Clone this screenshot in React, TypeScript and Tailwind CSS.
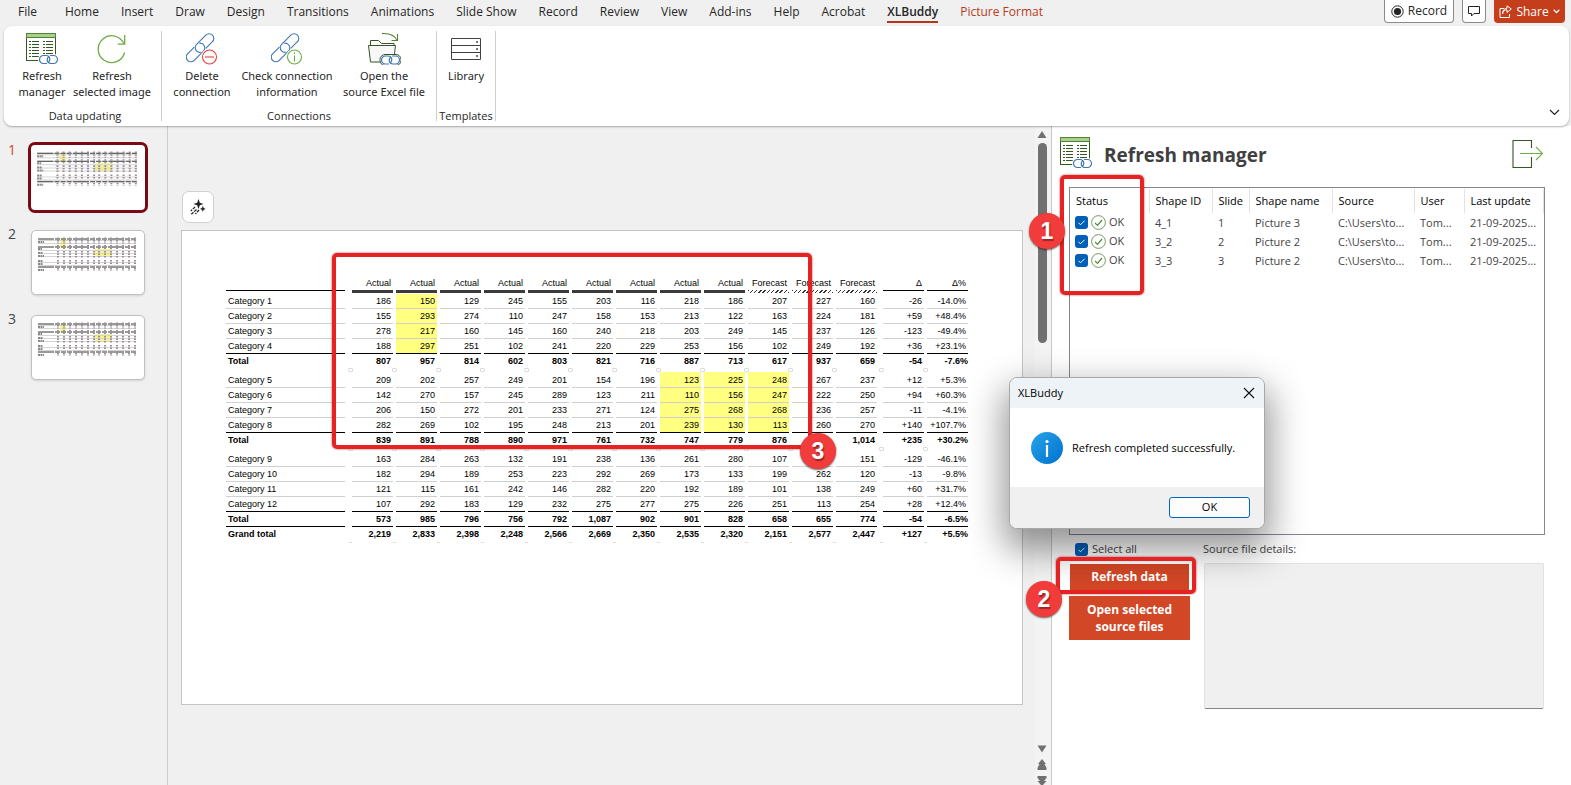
import type { ReactNode } from 'react';

const tabs = [
  'File', 'Home', 'Insert', 'Draw', 'Design', 'Transitions', 'Animations', 'Slide Show',
  'Record', 'Review', 'View', 'Add-ins', 'Help', 'Acrobat', 'XLBuddy', 'Picture Format',
];

type Row = { label: string; values: string[]; kind?: 'total' | 'grand'; before?: 'black'; highlight?: number[] };

const row = (label: string, values: string, extra: Partial<Row> = {}): Row => ({
  label,
  values: values.split(' ').map((v) => (v === '.' ? '' : v)),
  ...extra,
});

const headings = 'Actual Actual Actual Actual Actual Actual Actual Actual Actual Forecast Forecast Forecast Δ Δ%'.split(' ');

const sections: Row[][] = [
  [
    row('Category 1', '186 150 129 245 155 203 116 218 186 207 227 160 -26 -14.0%', { highlight: [1] }),
    row('Category 2', '155 293 274 110 247 158 153 213 122 163 224 181 +59 +48.4%', { highlight: [1] }),
    row('Category 3', '278 217 160 145 160 240 218 203 249 145 237 126 -123 -49.4%', { highlight: [1] }),
    row('Category 4', '188 297 251 102 241 220 229 253 156 102 249 192 +36 +23.1%', { highlight: [1], before: 'black' }),
    row('Total', '807 957 814 602 803 821 716 887 713 617 937 659 -54 -7.6%', { kind: 'grand' }),
  ],
  [
    row('Category 5', '209 202 257 249 201 154 196 123 225 248 267 237 +12 +5.3%', { highlight: [7, 8, 9] }),
    row('Category 6', '142 270 157 245 289 123 211 110 156 247 222 250 +94 +60.3%', { highlight: [7, 8, 9] }),
    row('Category 7', '206 150 272 201 233 271 124 275 268 268 236 257 -11 -4.1%', { highlight: [7, 8, 9] }),
    row('Category 8', '282 269 102 195 248 213 201 239 130 113 260 270 +140 +107.7%', { highlight: [7, 8, 9], before: 'black' }),
    row('Total', '839 891 788 890 971 761 732 747 779 876 . 1,014 +235 +30.2%', { kind: 'grand' }),
  ],
  [
    row('Category 9', '163 284 263 132 191 238 136 261 280 107 . 151 -129 -46.1%'),
    row('Category 10', '182 294 189 253 223 292 269 173 133 199 262 120 -13 -9.8%'),
    row('Category 11', '121 115 161 242 146 282 220 192 189 101 138 249 +60 +31.7%'),
    row('Category 12', '107 292 183 129 232 275 277 275 226 251 113 254 +28 +12.4%', { before: 'black' }),
    row('Total', '573 985 796 756 792 1,087 902 901 828 658 655 774 -54 -6.5%', { kind: 'total' }),
    row('Grand total', '2,219 2,833 2,398 2,248 2,566 2,669 2,350 2,535 2,320 2,151 2,577 2,447 +127 +5.5%', { kind: 'grand' }),
  ],
];

const files = [
  ['4_1', '1', 'Picture 3', 'C:\\Users\\to...', 'Tom...', '21-09-2025...'],
  ['3_2', '2', 'Picture 2', 'C:\\Users\\to...', 'Tom...', '21-09-2025...'],
  ['3_3', '3', 'Picture 2', 'C:\\Users\\to...', 'Tom...', '21-09-2025...'],
];

function SmallLink({ x, y }: { x: number; y: number }) {
  return (
    <g transform={`translate(${x} ${y})`} fill="none" strokeLinecap="round">
      <rect x="-1" y="-1" width="21" height="11" rx="5" fill="#fff" />
      <g stroke="#3f76b5" strokeWidth="1.2">
        <path d="M7.5 8.5H4.5a4 4 0 0 1 0-8H7a3.6 3.6 0 0 1 3.8 3.6 4 4 0 0 1-1.3 3" />
        <path d="M11.5 .5h3a4 4 0 0 1 0 8H12a3.6 3.6 0 0 1-3.8-3.6 4 4 0 0 1 1.3-3" />
      </g>
    </g>
  );
}

function ManagerIcon() {
  return (
    <svg width="33" height="32" viewBox="0 0 33 32" fill="none" aria-hidden="true">
      <rect x=".5" y=".5" width="29" height="27" fill="#fff" stroke="#375623" />
      <rect x=".5" y=".5" width="29" height="4" fill="#a9d08e" stroke="#548235" />
      {[8.5, 11.5, 14.5, 17.5, 20.5, 23.5].map((y) => (
        <g key={y} stroke="#375623">
          <path d={`M3 ${y}h2M6 ${y}h7M17 ${y}h2M20 ${y}h7`} />
        </g>
      ))}
      <SmallLink x={13} y={22} />
    </svg>
  );
}

function RefreshIcon() {
  return (
    <svg width="32" height="32" viewBox="0 0 32 32" fill="none" stroke="#70ad47" strokeWidth="1.3" aria-hidden="true">
      <path d="M28.6 19.5A13.4 13.4 0 1 1 28 11M28.7 2v9.2h-7" />
    </svg>
  );
}

function ChainIcon({ children }: { children: ReactNode }) {
  return (
    <svg width="32" height="32" viewBox="0 0 32 32" fill="none" strokeWidth="1.1" aria-hidden="true">
      <g stroke="#3f76b5">
        <g transform="translate(18.5 10) rotate(-45)">
          <path d="M-3 4.700H6.500a4.700 4.700 0 0 0 0-9.400h-13a4.700 4.700 0 0 0-4.700 4.700 4.700 4.700 0 0 0 2 3.900" />
        </g>
        <g transform="translate(9.5 19.5) rotate(-45)">
          <path d="M3-4.700H-6.500a4.700 4.700 0 0 0 0 9.400h13A4.700 4.700 0 0 0 11.200 0a4.700 4.700 0 0 0-2-3.900" />
        </g>
      </g>
      <circle cx="23.5" cy="24" r="8.4" fill="#fff" />
      {children}
    </svg>
  );
}

function FolderIcon() {
  return (
    <svg width="33" height="32" viewBox="0 0 33 32" fill="none" stroke="#375623" aria-hidden="true">
      <path d="M2.500 12V7.500h8l3 3h12.500V13" />
      <path d="M.5 12.500h27l-2 16.500h-23z" fill="#f8f8f8" />
      <path d="M14 .6c8-.4 13 2 15 7M29.500 1v6.500h-6" stroke="#548235" strokeWidth="1.1" />
      <SmallLink x={13} y={22.5} />
    </svg>
  );
}

function LibraryIcon() {
  return (
    <svg width="32" height="32" viewBox="0 0 32 32" fill="none" stroke="#404040" aria-hidden="true">
      <path d="M1.500 5.500h29v21h-29zM1.500 12.500h29M1.500 19.500h29" />
      <path d="M26 9h2M26 16h2M26 23h2" stroke="#777" strokeWidth="2" />
    </svg>
  );
}

function RibbonButton({ icon, top, bottom, width }: { icon: ReactNode; top: string; bottom?: string; width: string }) {
  return (
    <button className={`flex flex-col items-center font-['Noto_Sans',sans-serif] text-[11px] whitespace-nowrap ${width}`}>
      {icon}
      <span className="mt-[3px] leading-4">{top}</span>
      {bottom && <span className="leading-4">{bottom}</span>}
    </button>
  );
}

function RibbonGroup({ title, pad, children }: { title: string; pad: string; children: ReactNode }) {
  return (
    <section className={`flex flex-col border-r border-[#cfcfcf] ${pad}`}>
      <div className="flex flex-1 items-start gap-[6px] pt-[2px]">{children}</div>
      <h2 className="-mb-[3px] self-center text-[11px] leading-4 whitespace-nowrap">{title}</h2>
    </section>
  );
}

function Tick({ label }: { label: string }) {
  return (
    <span className="relative inline-flex size-[13px] shrink-0">
      <input type="checkbox" defaultChecked aria-label={label} className="size-[13px] appearance-none rounded-[3px] bg-[#005fb8]" />
      <svg className="pointer-events-none absolute inset-0" width="13" height="13" viewBox="0 0 13 13" fill="none" stroke="#fff" aria-hidden="true">
        <path d="M3.500 6.800l2 2 4-4" />
      </svg>
    </span>
  );
}

function Callout({ n, place }: { n: number; place: string }) {
  return (
    <span className={`absolute z-30 flex size-9 items-center justify-center rounded-full bg-[#f23b3b] font-['Liberation_Sans',sans-serif] text-[23px] font-bold text-white shadow-[0_1px_2px_rgba(0,0,0,0.6)] [text-shadow:1px_2px_1px_rgba(0,0,0,0.35)] ${place}`}>
      {n}
    </span>
  );
}

function Frame({ place }: { place: string }) {
  return <div className={`pointer-events-none absolute z-20 rounded-[5px] border-4 border-[#e62222] shadow-[0_0_2px_rgba(120,0,0,0.8)] ${place}`} />;
}

function columnGap(i: number) {
  return i === 13 ? '' : i === 11 ? 'pr-[6px]' : 'pr-[3px]';
}

function GapMark({ round }: { round?: boolean }) {
  return round
    ? <span className="absolute -right-px bottom-0 h-1 w-[5px] rounded-[1px] border border-[#dcdcdc]" />
    : <span className="absolute right-0 bottom-0 h-px w-[3px] bg-[#dcdcdc]" />;
}

function ReportTable() {
  return (
    <table className="table-fixed border-collapse font-['Liberation_Sans',sans-serif] text-[9px] leading-[13px] text-black">
      <colgroup>
        <col className="w-[126px]" />
        {headings.map((_, i) => (
          <col key={i} className={i === 13 ? 'w-[41px]' : i === 11 ? 'w-[47px]' : 'w-[44px]'} />
        ))}
      </colgroup>
      <thead>
        <tr className="h-[19px] align-bottom">
          <th className="p-0 pr-[7px] pb-[3px]"><div className="border-b border-black" /></th>
          {headings.map((h, i) => (
            <th key={i} className={`p-0 text-right font-normal ${columnGap(i)}`}>
              <div className="pt-[2px] pr-[2px]">{h}</div>
              {i < 9 && <div className="mb-px h-[3px] bg-[#3c3a3c]" />}
              {i >= 9 && i < 12 && (
                <div className="mb-px h-[3px] bg-[repeating-linear-gradient(135deg,#333_0,#333_1px,#fff_1px,#fff_3px)]" />
              )}
              {i >= 12 && <div className="mb-[3px] h-px bg-black" />}
            </th>
          ))}
        </tr>
      </thead>
      {sections.map((rows, s) => (
        <tbody key={s}>
          {rows.map((r, k) => {
            const line = r.kind === 'grand' ? 'border-b border-transparent' : r.kind === 'total' || r.before ? 'border-b border-black' : 'border-b border-[#d0d0d0]';
            const height = s > 0 && k === 0 ? 'pt-[2px]' : 'pt-px';
            return (
              <tr key={k} className={r.kind ? 'font-bold' : ''}>
                <th className="p-0 pr-[7px] text-left" scope="row">
                  <div className={`pl-[2px] ${r.kind ? '' : 'font-normal'} ${line} ${height}`}>{r.label}</div>
                </th>
                {r.values.map((v, i) => (
                  <td key={i} className={`p-0 text-right ${columnGap(i)}`}>
                    <div className={`${i > 12 && r.kind ? '' : 'pr-[2px]'} ${line} ${height} ${r.highlight?.includes(i) ? 'bg-[#ffff80]' : ''}`}>{v || '\u00a0'}</div>
                  </td>
                ))}
              </tr>
            );
          })}
          {s < 2 && (
            <tr className="h-[3px]">
              {Array.from({ length: 14 }, (_, i) => (
                <td key={i} className="relative h-[3px] p-0"><GapMark round /></td>
              ))}
            </tr>
          )}
        </tbody>
      ))}
      <tfoot>
        <tr className="h-px">
          {Array.from({ length: 14 }, (_, i) => (
            <td key={i} className="relative h-px p-0"><GapMark /></td>
          ))}
        </tr>
      </tfoot>
    </table>
  );
}

function Miniature() {
  return (
    <svg className="w-full" viewBox="0 0 112 63" aria-hidden="true">
      <rect x="28" y="8" width="6" height="8" fill="#f8f48a" />
      <rect x="63" y="18" width="17" height="8" fill="#f8f48a" />
      <path d="M6 9.500h98M6 12.500h98M6 19.500h98M6 22.500h98M6 25.500h98M6 31.500h98M6 34.500h98" stroke="#d4d4d4" />
      <path d="M6 8h98M6 16h98M6 36h98" stroke="#333" strokeDasharray="16 1 5 1 5 1 5 1" />
      <path d="M6 11h6M6 18h4M6 22h5M6 25h6M6 30h5M6 33h5M6 39h6" stroke="#888" strokeWidth="2" strokeDasharray="2 .5" />
      {[26, 32, 38, 44, 50, 56, 62, 67, 73, 79, 85, 91, 97, 103].map((x) => (
        <path key={x} d={`M${x} 6.500v6M${x} 14v5M${x} 20v7M${x} 29v5M${x} 37v3`} stroke="#9d8f9a" strokeWidth="2" strokeDasharray="1.500 1" />
      ))}
    </svg>
  );
}

function Dialog() {
  return (
    <div role="dialog" aria-labelledby="dialog-title" className="absolute top-[251px] -left-[43px] z-20 w-[256px] overflow-hidden rounded-[8px] border border-[#a8a8a8] bg-white text-[11px] text-black">
      <div className="flex h-[30px] items-center justify-between bg-[#eef3f8] pr-[9px] pl-2">
        <h2 id="dialog-title">XLBuddy</h2>
        <button aria-label="Close">
          <svg width="12" height="12" viewBox="0 0 12 12" stroke="#111" strokeWidth="1.100"><path d="M1 1l10 10M11 1L1 11" /></svg>
        </button>
      </div>
      <div className="flex h-[79px] items-center gap-[9px] pl-[21px]">
        <svg width="32" height="32" viewBox="0 0 32 32" aria-hidden="true">
          <defs><linearGradient id="info" x1="0" y1="0" x2="1" y2="1"><stop stopColor="#27a5e8" /><stop offset="1" stopColor="#0070d0" /></linearGradient></defs>
          <circle cx="16" cy="16" r="16" fill="url(#info)" />
          <circle cx="16" cy="9.500" r="1.600" fill="#fff" />
          <path d="M16 13v12" stroke="#fff" strokeWidth="2.200" />
        </svg>
        <p className="pt-px whitespace-nowrap">Refresh completed successfully.</p>
      </div>
      <div className="flex h-[41px] items-center justify-end bg-[#f0f0f0] pr-[14px]">
        <button className="h-[21px] w-[81px] rounded-[3px] border border-[#0067c0] bg-[#fdfdfd]">OK</button>
      </div>
    </div>
  );
}

export default function App() {
  return (
    <div className="flex h-screen flex-col overflow-hidden bg-[#f0f0f0] font-['Open_Sans',sans-serif] text-[12px] text-[#262626]">
      <header className="flex h-[26px] shrink-0 items-start justify-between">
        <nav className="flex gap-[22px] pl-[18px]">
          {tabs.map((t) => (
            <button
              key={t}
              className={`h-[23px] leading-[23px] whitespace-nowrap ${t === 'File' ? 'mr-[6px]' : ''} ${t === 'XLBuddy' ? 'border-b-2 border-[#b7351c] font-semibold' : ''} ${t === 'Picture Format' ? 'text-[#b83b1d]' : ''}`}
            >
              {t}
            </button>
          ))}
        </nav>
        <div className="flex pr-[6px]">
          <button className="mr-2 flex h-[23px] w-[70px] items-center justify-center gap-1 rounded-b-[4px] border border-t-0 border-[#8a8a8a] bg-white">
            <svg width="13" height="13" viewBox="0 0 13 13" aria-hidden="true"><circle cx="6.500" cy="6.500" r="5.700" fill="none" stroke="#222" /><circle cx="6.500" cy="6.500" r="3.600" fill="#222" /></svg>
            Record
          </button>
          <button aria-label="Comments" className="mr-2 flex h-[23px] w-6 items-center justify-center rounded-b-[4px] border border-t-0 border-[#8a8a8a] bg-white">
            <svg width="12" height="12" viewBox="0 0 12 12" fill="none" stroke="#222"><path d="M.5 1.500h11v7H6L3.500 11V8.500h-3z" /></svg>
          </button>
          <button className="flex h-[23px] w-[71px] items-center justify-center gap-1 rounded-b-[4px] bg-[#c43e1c] text-white">
            <svg width="13" height="13" viewBox="0 0 13 13" fill="none" stroke="#fff" aria-hidden="true"><path d="M5 3.500H1v9h9.500V9M3.500 9C4 6 5.500 4.800 8 4.800V7.500L12.300 4 8 .8v2.400C5 3.500 3.500 5.500 3.500 9z" /></svg>
            Share
            <svg width="7" height="5" viewBox="0 0 7 5" fill="none" stroke="#fff" strokeWidth="1.300" aria-hidden="true"><path d="M.7 .8l2.800 2.800L6.300 .8" /></svg>
          </button>
        </div>
      </header>

      <div className="relative z-10 mr-[2px] ml-1 flex h-[100px] shrink-0 rounded-[8px] bg-white pt-[5px] pb-[5px] shadow-[0_1px_2px_rgba(0,0,0,0.3)]">
        <RibbonGroup title="Data updating" pad="pl-[14px] pr-[9px]">
          <RibbonButton icon={<ManagerIcon />} top="Refresh" bottom="manager" width="w-12" />
          <RibbonButton icon={<RefreshIcon />} top="Refresh" bottom="selected image" width="w-20" />
        </RibbonGroup>
        <RibbonGroup title="Connections" pad="px-[10px]">
          <RibbonButton
            icon={<ChainIcon><g stroke="#e8413c"><circle cx="23.500" cy="24" r="7" /><path d="M19 24h9" /></g></ChainIcon>}
            top="Delete" bottom="connection" width="w-[60px]"
          />
          <RibbonButton
            icon={<ChainIcon><g stroke="#70ad47"><circle cx="23.500" cy="24" r="7" /><path d="M23.500 22.500v6M23.500 19.500v1.500" /></g></ChainIcon>}
            top="Check connection" bottom="information" width="w-[98px]"
          />
          <RibbonButton icon={<FolderIcon />} top="Open the" bottom="source Excel file" width="w-[84px]" />
        </RibbonGroup>
        <RibbonGroup title="Templates" pad="px-[2px]">
          <RibbonButton icon={<LibraryIcon />} top="Library" width="w-[54px]" />
        </RibbonGroup>
        <button aria-label="Collapse ribbon" className="mt-auto mr-[9px] mb-[5px] ml-auto">
          <svg width="11" height="7" viewBox="0 0 11 7" fill="none" stroke="#222" strokeWidth="1.200"><path d="M1 1l4.500 4.500L10 1" /></svg>
        </button>
      </div>

      <main className="flex min-h-0 flex-1">
        <aside className="w-[168px] shrink-0 border-r border-[#cdcdcd] pt-4">
          <ol>
            {[1, 2, 3].map((n) => (
              <li key={n} className={`flex items-start pl-2 text-[14px] leading-4 ${n === 1 ? 'mb-[13px] text-[#d24726]' : 'mb-4 text-[#444]'}`}>
                <span className="w-5">{n}</span>
                <button
                  aria-label={`Slide ${n}`}
                  className={n === 1
                    ? 'h-[71px] w-[120px] rounded-[7px] border-[3px] border-[#790a14] bg-white'
                    : 'mt-1 ml-[3px] h-[65px] w-[114px] rounded-[5px] border border-[#c2c2c2] bg-white shadow-sm'}
                >
                  <Miniature />
                </button>
              </li>
            ))}
          </ol>
        </aside>

        <section className="flex min-w-0 flex-1 flex-col pt-[65px] pr-3 pl-[13px]">
          <button aria-label="Designer" className="ml-px flex size-8 shrink-0 items-center justify-center rounded-[7px] border border-[#d0d0d0] bg-white">
            <svg width="16" height="16" viewBox="0 0 16 16" fill="#222" aria-hidden="true">
              <path d="M8.500 0l1.300 3.700L13.500 5 9.800 6.300 8.500 10 7.200 6.300 3.500 5l3.700-1.300zM12.800 7l.9 2 2 .9-2 .9-.9 2-.9-2-2-.9 2-.9z" />
              <path d="M5 8L.8 12M6.500 10.500L1 15.500M9 11l-3.500 4" stroke="#222" strokeWidth="1.200" strokeDasharray="3 1" />
            </svg>
          </button>
          <div className="relative mt-[7px] h-[475px] shrink-0 border border-[#c4c4c4] bg-white pt-11 pl-11">
            <ReportTable />
            <Frame place="top-[22px] left-[150px] h-[196px] w-[480px]" />
            <Callout n={3} place="top-[202px] left-[618px]" />
          </div>
        </section>

        <div className="flex w-4 shrink-0 flex-col items-center bg-[#f3f3f3] pt-1 pr-[2px]" aria-hidden="true">
          <svg width="10" height="8" viewBox="0 0 10 8" fill="#707070" className="mt-px shrink-0"><path d="M5 0l4.500 7H.5z" /></svg>
          <div className="mt-1 h-[200px] w-[9px] rounded-full bg-[#707070]" />
          <svg className="mt-auto" width="10" height="8" viewBox="0 0 10 8" fill="#707070"><path d="M5 7.500L.5 .5h9z" /></svg>
          <svg className="mt-[6px]" width="10" height="12" viewBox="0 0 10 12" fill="#707070"><path d="M5 0l4 5H7.500L9.500 9v2h-9V9l2-4H1z" /></svg>
          <svg className="mt-[5px] shrink-0" width="10" height="9" viewBox="0 0 10 9" fill="#707070"><path d="M.5 0h9v2L7 5h2.500L6 9H4L.5 5H3L.5 2z" /></svg>
        </div>

        <aside className="relative w-[520px] shrink-0 border-l border-[#c8c8c8] bg-white">
          <div className="flex items-start justify-between pt-[11px] pr-[28px] pl-2">
            <div className="flex items-start gap-[11px]">
              <ManagerIcon />
              <h1 className="pt-[2px] text-[19px] leading-8 font-bold text-[#404040]">Refresh manager</h1>
            </div>
            <button aria-label="Exit" className="mt-[2px]">
              <svg width="31" height="30" viewBox="0 0 31 30" fill="none" aria-hidden="true">
                <path d="M19.500 9V1.500H1v27h18.500V18" stroke="#375623" strokeWidth="1.100" />
                <path d="M8 14.500h22M24 8l6.500 6.500L24 21" stroke="#70ad47" strokeWidth="1.100" />
              </svg>
            </button>
          </div>

          <div className="mt-4 mr-[26px] ml-[17px] h-[348px] border border-[#828790] pt-px">
            <table className="w-full table-fixed border-collapse text-[11px] whitespace-nowrap text-[#444]">
              <colgroup>
                <col className="w-[79px]" /><col className="w-[63px]" /><col className="w-[37px]" /><col className="w-[83px]" />
                <col className="w-[82px]" /><col className="w-[50px]" /><col />
              </colgroup>
              <thead>
                <tr className="h-6 text-left text-black">
                  {['Status', 'Shape ID', 'Slide', 'Shape name', 'Source', 'User', 'Last update'].map((h) => (
                    <th key={h} className="border-r border-[#e2e2e2] p-0 pl-[6px] font-normal">{h}</th>
                  ))}
                </tr>
              </thead>
              <tbody>
                {files.map((f) => (
                  <tr key={f[0]} className="h-[19px]">
                    <td className="p-0 pl-[5px]">
                      <div className="flex items-center gap-[3px]">
                        <Tick label={`Select ${f[0]}`} />
                        <svg width="15" height="15" viewBox="0 0 15 15" fill="none" aria-hidden="true">
                          <circle cx="7.500" cy="7.500" r="6.900" stroke="#7a9668" />
                          <path d="M4 7.800l2.500 2.500L11 5" stroke="#4d8a2e" strokeWidth="1.200" />
                        </svg>
                        OK
                      </div>
                    </td>
                    {f.map((c, i) => (
                      <td key={i} className="p-0 pt-px pl-[6px]">{c}</td>
                    ))}
                  </tr>
                ))}
              </tbody>
            </table>
          </div>

          <div className="flex pt-[6px] pr-[27px] pl-[17px]">
            <div className="w-[121px] shrink-0">
              <label className="flex h-4 items-center gap-1 pl-[6px] text-[11px] text-[#444]">
                <Tick label="Select all" />
                Select all
              </label>
              <button className="mt-[7px] ml-px block h-[26px] w-[119px] bg-[#d24726] text-[12px] font-bold text-white">Refresh data</button>
              <button className="mt-[6px] block h-11 w-full bg-[#d24726] text-[12px] leading-[17px] font-bold text-white">
                Open selected<br />source files
              </button>
            </div>
            <div className="ml-[13px] flex flex-1 flex-col">
              <label htmlFor="details" className="h-4 text-[11px] leading-4 text-[#444]">Source file details:</label>
              <textarea id="details" readOnly className="mt-[6px] ml-px h-[146px] resize-none rounded-[2px] border border-[#e2e2e2] border-b-[#868686] bg-[#f0f0f0]" />
            </div>
          </div>

          <div className="pointer-events-none absolute top-[252px] -left-[42px] z-10 h-[150px] w-[254px] rounded-[8px] shadow-[0_16px_36px_6px_rgba(0,0,0,0.42)]" />
          <Dialog />
          <Frame place="top-[49px] left-[8px] h-[120px] w-[84px]" />
          <Callout n={1} place="top-[87px] -left-[23px]" />
          <Frame place="top-[431px] left-[4px] h-[37px] w-[140px]" />
          <Callout n={2} place="top-[455px] -left-[26px]" />
        </aside>
      </main>
    </div>
  );
}
